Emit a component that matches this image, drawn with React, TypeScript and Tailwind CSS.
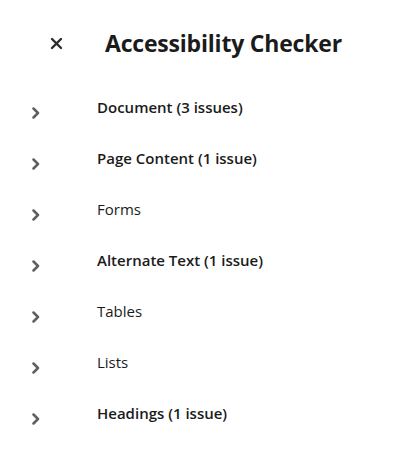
import React from 'react';

const ITEMS: { label: string; bold: boolean }[] = [
  { label: 'Document (3 issues)', bold: true },
  { label: 'Page Content (1 issue)', bold: true },
  { label: 'Forms', bold: false },
  { label: 'Alternate Text (1 issue)', bold: true },
  { label: 'Tables', bold: false },
  { label: 'Lists', bold: false },
  { label: 'Headings (1 issue)', bold: true },
];

const Chevron = () => (
  <svg width="8" height="12" viewBox="0 0 8 12" className="mt-[10px] shrink-0">
    <path d="M1.5 1.5 L6 6 L1.5 10.5" fill="none" stroke="#5f5f5f" strokeWidth="2.5" strokeLinecap="round" strokeLinejoin="round" />
  </svg>
);

const CloseIcon = () => (
  <svg width="13" height="13" viewBox="0 0 13 13">
    <path d="M2 2 L11 11 M11 2 L2 11" stroke="#2c2c2c" strokeWidth="2.4" strokeLinecap="round" />
  </svg>
);

export default function App() {
  return (
    <div className="w-[396px] h-[452px] bg-white text-[#1b1b1b]" style={{ fontFamily: '"Open Sans", "Liberation Sans", sans-serif' }}>
      <div className="flex items-center pt-[27px] pl-[50px]">
        <button className="w-[13px] h-[13px] flex items-center justify-center">
          <CloseIcon />
        </button>
        <h1 className="ml-[42px] text-[23px] font-bold tracking-[-0.2px] leading-[32px]">Accessibility Checker</h1>
      </div>
      <ul className="mt-[38px]">
        {ITEMS.map(item => (
          <li key={item.label} className="flex items-start h-[51px] pl-[32px]">
            <Chevron />
            <span className={`ml-[57px] text-[15px] leading-[20px] ${item.bold ? 'font-semibold' : 'font-normal'}`}>{item.label}</span>
          </li>
        ))}
      </ul>
    </div>
  );
}
